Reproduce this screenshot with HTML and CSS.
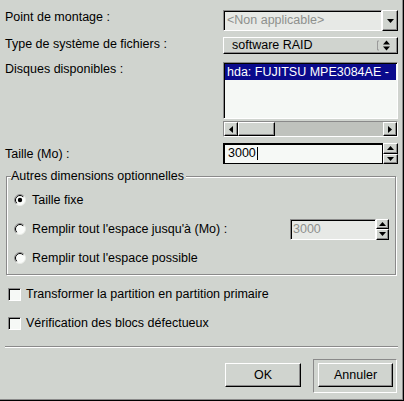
FILE: index.html
```html
<!DOCTYPE html>
<html lang="fr">
<head>
<meta charset="utf-8">
<title>Partition</title>
<link rel="stylesheet" href="styles.css">
</head>
<body>
<div class="dialog">
  <div class="form">
    <div class="row r1">
      <span class="lbl">Point de montage :</span>
      <div class="combo">
        <div class="combo-entry">&lt;Non applicable&gt;</div>
        <div class="combo-btn raised">
          <svg width="7" height="4" viewBox="0 0 7 4"><polygon points="0,0 7,0 3.5,4" fill="#000"/></svg>
        </div>
      </div>
    </div>
    <div class="row r2">
      <span class="lbl">Type de système de fichiers :</span>
      <div class="optmenu raised">
        <span class="opt-text">software RAID</span>
        <svg class="opt-ind" width="16" height="11" viewBox="0 0 16 11">
          <path d="M1.5 1 V10 M1.5 1 H3 M1.5 10 H3" stroke="#9a9a9a" stroke-width="1" fill="none"/>
          <polygon points="7,4.5 14,4.5 10.5,0.5" fill="#000"/>
          <polygon points="7,6.5 14,6.5 10.5,10.5" fill="#000"/>
        </svg>
      </div>
    </div>
    <div class="row r3">
      <span class="lbl">Disques disponibles :</span>
      <div class="listwrap">
        <div class="list">
          <div class="item sel">hda: FUJITSU MPE3084AE -</div>
        </div>
        <div class="hscroll">
          <div class="sb-btn raised">
            <svg width="4" height="7" viewBox="0 0 4 7"><polygon points="4,0 4,7 0,3.5" fill="#000"/></svg>
          </div>
          <div class="sb-thumb raised"></div>
          <div class="sb-trough"></div>
          <div class="sb-btn raised">
            <svg width="4" height="7" viewBox="0 0 4 7"><polygon points="0,0 0,7 4,3.5" fill="#000"/></svg>
          </div>
        </div>
      </div>
    </div>
    <div class="row r4">
      <span class="lbl lbl-mid">Taille (Mo) :</span>
      <div class="spin">
        <div class="spin-entry focus">3000<span class="caret"></span></div>
        <div class="spin-btns">
          <div class="spin-btn raised"><svg width="7" height="4" viewBox="0 0 7 4"><polygon points="0,4 7,4 3.5,0" fill="#000"/></svg></div>
          <div class="spin-btn raised"><svg width="7" height="4" viewBox="0 0 7 4"><polygon points="0,0 7,0 3.5,4" fill="#000"/></svg></div>
        </div>
      </div>
    </div>
  </div>

  <fieldset class="frame">
    <legend class="frame-title">Autres dimensions optionnelles</legend>
    <div class="opt">
      <svg class="radio" width="12" height="12" viewBox="0 0 12 12">
        <circle cx="6" cy="6" r="5.5" fill="#fafcfa" stroke="#e8ebe6"/>
        <path d="M2.1 9.9 A5.5 5.5 0 0 1 9.9 2.1" stroke="#8a8a8a" fill="none"/>
        <path d="M2.8 9.2 A4.5 4.5 0 0 1 9.2 2.8" stroke="#000" fill="none"/>
        <circle cx="6" cy="6" r="2.2" fill="#000"/>
      </svg>
      <span>Taille fixe</span>
    </div>
    <div class="opt">
      <svg class="radio" width="12" height="12" viewBox="0 0 12 12">
        <circle cx="6" cy="6" r="5.5" fill="#fafcfa" stroke="#e8ebe6"/>
        <path d="M2.1 9.9 A5.5 5.5 0 0 1 9.9 2.1" stroke="#8a8a8a" fill="none"/>
        <path d="M2.8 9.2 A4.5 4.5 0 0 1 9.2 2.8" stroke="#000" fill="none"/>
      </svg>
      <span>Remplir tout l'espace jusqu'à (Mo) :</span>
      <div class="spin spin-small">
        <div class="spin-entry disabled">3000</div>
        <div class="spin-btns">
          <div class="spin-btn raised"><svg width="7" height="4" viewBox="0 0 7 4"><polygon points="0,4 7,4 3.5,0" fill="#000"/></svg></div>
          <div class="spin-btn raised"><svg width="7" height="4" viewBox="0 0 7 4"><polygon points="0,0 7,0 3.5,4" fill="#000"/></svg></div>
        </div>
      </div>
    </div>
    <div class="opt">
      <svg class="radio" width="12" height="12" viewBox="0 0 12 12">
        <circle cx="6" cy="6" r="5.5" fill="#fafcfa" stroke="#e8ebe6"/>
        <path d="M2.1 9.9 A5.5 5.5 0 0 1 9.9 2.1" stroke="#8a8a8a" fill="none"/>
        <path d="M2.8 9.2 A4.5 4.5 0 0 1 9.2 2.8" stroke="#000" fill="none"/>
      </svg>
      <span>Remplir tout l'espace possible</span>
    </div>
  </fieldset>

  <div class="checks">
    <div class="check"><span class="box"></span><span>Transformer la partition en partition primaire</span></div>
    <div class="check"><span class="box"></span><span>Vérification des blocs défectueux</span></div>
  </div>

  <div class="sep"></div>

  <div class="buttons">
    <div class="btn raised">OK</div>
    <div class="default-frame">
      <div class="btn raised">Annuler</div>
    </div>
  </div>
</div>
</body>
</html>
```

FILE: styles.css
```css
html, body {
  margin: 0;
  padding: 0;
}
body {
  background: #d0d4cf;
  font-family: "Liberation Sans", Arial, sans-serif;
  font-size: 12.5px;
  color: #000;
}
.dialog {
  width: 404px;
  height: 401px;
  box-sizing: border-box;
  border-right: 1px solid #000;
  border-bottom: 1px solid #000;
  box-shadow: inset -1px -1px 0 #8a8a8a;
  overflow: hidden;
}
.raised {
  box-sizing: border-box;
  background: #d0d4cf;
  border: 1px solid;
  border-color: #fff #000 #000 #fff;
  box-shadow: inset -1px -1px 0 #8a8a8a;
}

/* form rows */
.form {
  padding-top: 10px;
  display: flex;
  flex-direction: column;
}
.row {
  display: flex;
  padding-left: 5px;
}
.r2 { margin-top: 6px; }
.r3 { margin-top: 8px; }
.r4 { margin-top: 6px; }
.lbl {
  width: 218px;
  line-height: 14px;
  white-space: nowrap;
}
.lbl-mid { align-self: center; }

/* combo */
.combo {
  display: flex;
  width: 175px;
  height: 21px;
}
.combo-entry {
  flex: 1;
  box-sizing: border-box;
  background: #e7e9e6;
  color: #8e908d;
  border: 1px solid;
  border-color: #8a8a8a #fff #fff #8a8a8a;
  box-shadow: inset 1px 1px 0 #000;
  padding-left: 3px;
  line-height: 19px;
  white-space: nowrap;
  overflow: hidden;
}
.combo-btn {
  width: 16px;
  display: flex;
  align-items: center;
  justify-content: center;
}

/* option menu */
.optmenu {
  width: 175px;
  height: 17px;
  display: flex;
  align-items: center;
  padding-left: 8px;
  padding-right: 5px;
}
.opt-text {
  flex: 1;
  line-height: 15px;
}
.opt-ind { display: block; }

/* list */
.listwrap {
  width: 175px;
  display: flex;
  flex-direction: column;
}
.list {
  box-sizing: border-box;
  height: 57px;
  background: #f5f8f5;
  border: 1px solid;
  border-color: #8a8a8a #fff #fff #8a8a8a;
  box-shadow: inset 1px 1px 0 #000;
  padding: 1px;
  overflow: hidden;
}
.item {
  height: 16px;
  line-height: 16px;
  padding-left: 2px;
  white-space: nowrap;
  overflow: hidden;
}
.item.sel {
  background: #0a0a8c;
  color: #fff;
}
.hscroll {
  margin-top: 2px;
  height: 16px;
  box-sizing: border-box;
  display: flex;
  background: #bfc2bd;
  border: 1px solid;
  border-color: #8a8a8a #fff #fff #8a8a8a;
}
.sb-btn {
  width: 14px;
  display: flex;
  align-items: center;
  justify-content: center;
}
.sb-thumb {
  width: 37px;
}
.sb-trough {
  flex: 1;
}

/* spin */
.spin {
  display: flex;
  width: 175px;
  height: 21px;
}
.spin-entry {
  flex: 1;
  box-sizing: border-box;
  background: #f6f9f6;
  border: 1px solid;
  border-color: #8a8a8a #fff #fff #8a8a8a;
  box-shadow: inset 1px 1px 0 #000;
  padding-left: 4px;
  line-height: 19px;
  display: flex;
  align-items: center;
}
.spin-entry.focus {
  border-color: #000;
  box-shadow: inset 1px 1px 0 #000;
}
.spin-entry.disabled {
  background: #e7e9e6;
  color: #8e908d;
  padding-left: 2px;
}
.caret {
  display: inline-block;
  width: 1px;
  height: 13px;
  background: #000;
  margin-left: 1px;
}
.spin-btns {
  width: 15px;
  display: flex;
  flex-direction: column;
}
.spin-btn {
  flex: 1;
  display: flex;
  align-items: center;
  justify-content: center;
}
.spin-small {
  width: 99px;
  margin-left: auto;
}
.spin-small .spin-btns {
  width: 13px;
}

/* frame */
.frame {
  margin: 5px 7px 0 6px;
  padding: 7px 6px 6px 7px;
  border: 1px solid #8a8a8a;
  box-shadow: inset 1px 1px 0 #fff, 1px 1px 0 #fff;
  min-width: 0;
  display: flex;
  flex-direction: column;
  gap: 9px;
}
.frame-title {
  padding: 0 2px 0 0;
  margin-left: -3px;
  line-height: 14px;
  background: #d0d4cf;
}
.opt {
  display: flex;
  align-items: center;
  height: 20px;
  white-space: nowrap;
}
.radio {
  display: block;
  margin-right: 6px;
  flex: none;
}

/* checks */
.checks {
  margin-top: 9px;
  display: flex;
  flex-direction: column;
  gap: 9px;
  padding-left: 8px;
}
.check {
  display: flex;
  align-items: center;
  height: 20px;
  white-space: nowrap;
}
.box {
  width: 13px;
  height: 13px;
  box-sizing: border-box;
  background: #f6f9f6;
  border: 1px solid;
  border-color: #8a8a8a #fff #fff #8a8a8a;
  box-shadow: inset 1px 1px 0 #000;
  margin-right: 5px;
  flex: none;
}

/* separator */
.sep {
  margin: 13px 5px 0 5px;
  border-top: 1px solid #8a8a8a;
  border-bottom: 1px solid #fff;
}

/* buttons */
.buttons {
  margin-top: 11px;
  display: flex;
  justify-content: flex-end;
  align-items: flex-start;
  padding-right: 6px;
  gap: 12px;
}
.btn {
  width: 76px;
  height: 24px;
  display: flex;
  align-items: center;
  justify-content: center;
}
.buttons > .btn {
  margin-top: 4px;
}
.default-frame {
  border: 1px solid;
  border-color: #8a8a8a #fff #fff #8a8a8a;
  padding: 3px 3px 5px 4px;
}
.default-frame .btn {
  width: 75px;
}
```
